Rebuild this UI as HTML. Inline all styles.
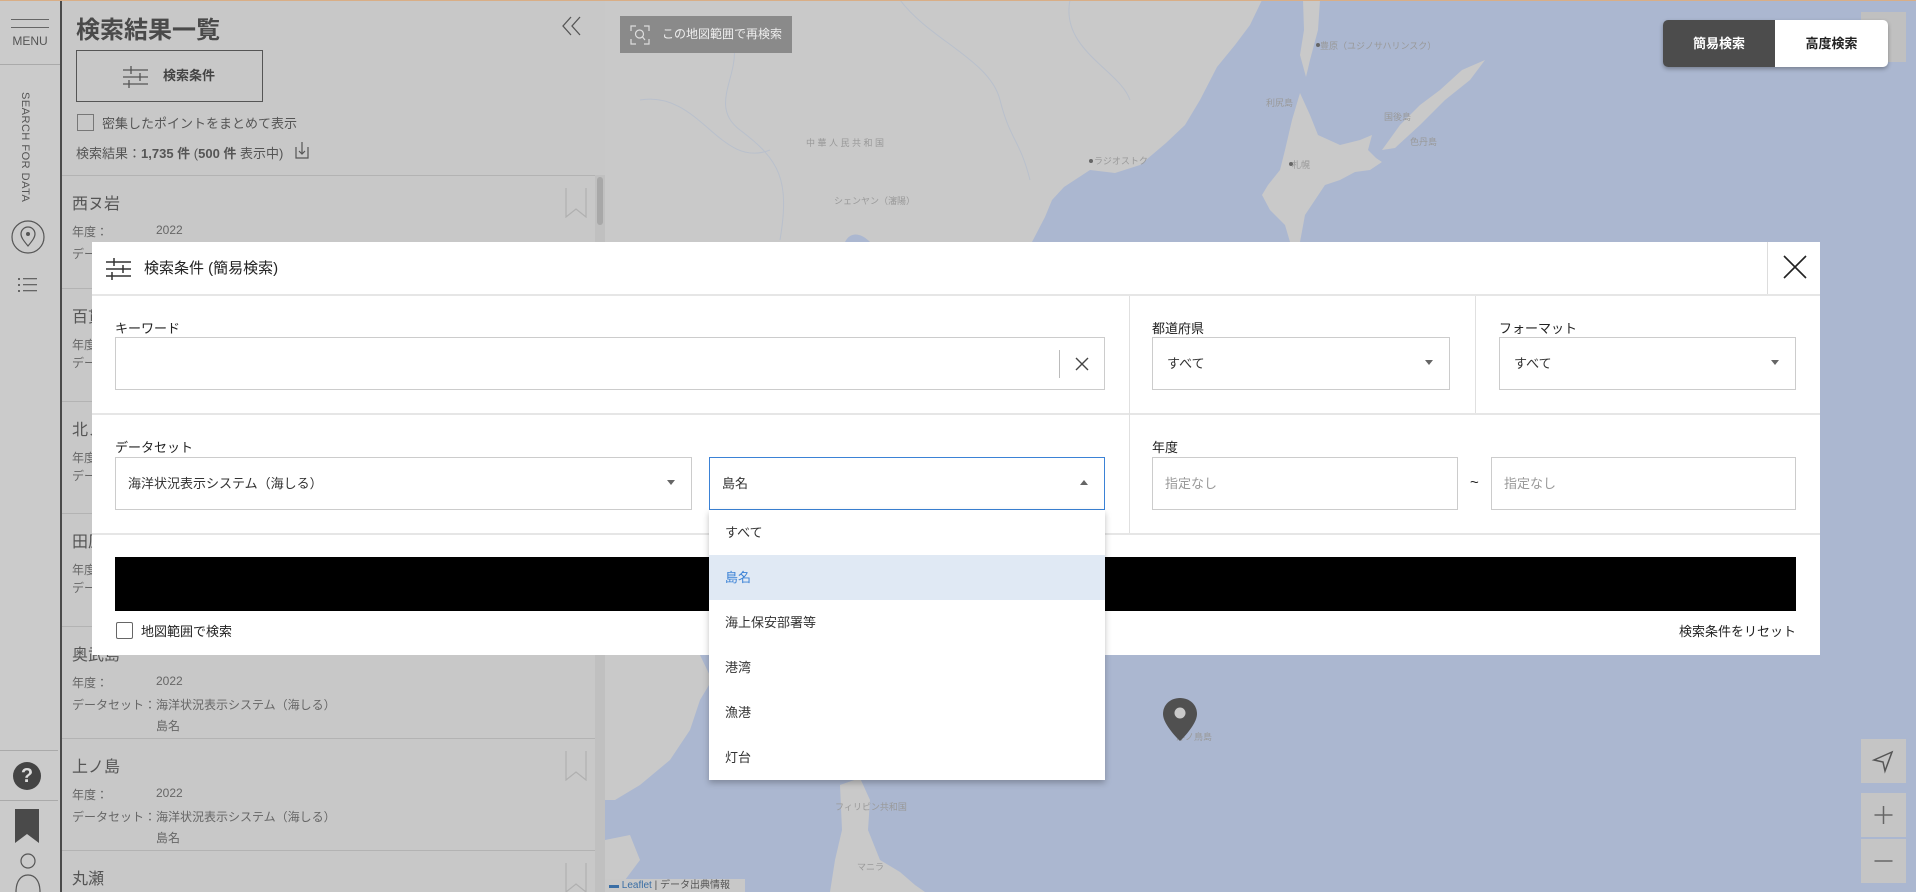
<!DOCTYPE html>
<html><head><meta charset="utf-8"><style>
*{box-sizing:border-box;margin:0;padding:0}
html,body{width:1916px;height:892px;overflow:hidden}
body{position:relative;font-family:"Liberation Sans","Noto Sans CJK JP",sans-serif;background:#abb7d0;color:#222}
.abs{position:absolute}
#rail{left:0;top:0;width:62px;height:892px;background:#cbcbcb;border-right:2px solid #4a4a4a;overflow:hidden}
#side{left:62px;top:0;width:543px;height:892px;background:#c8c8c8;color:#555;overflow:hidden}
.item{position:absolute;left:0;width:533px;height:112px;border-top:1px solid #b3b3b3}
.item .t{position:absolute;left:10px;top:14px;font-size:16px;color:#555}
.item .r{position:absolute;left:10px;font-size:12px;color:#666}
.item .v{position:absolute;left:94px;font-size:12px;color:#666}
.bm{position:absolute;right:8px;top:12px}
#modal{left:92px;top:242px;width:1728px;height:413px;background:#fff}
.lbl{position:absolute;font-size:13px;color:#222}
.box{position:absolute;border:1px solid #ccc;background:#fff;font-size:13px;color:#333}
.arr{position:absolute;right:16px;top:22px;width:0;height:0;border-left:4px solid transparent;border-right:4px solid transparent;border-top:5px solid #666}
.dd div{height:45px;line-height:45px;padding-left:16px;font-size:13px;color:#333}
</style></head><body>
<div class="abs" style="left:0;top:0;width:1916px;height:1px;background:#d9ae86;z-index:9"></div>
<!-- map -->
<svg class="abs" style="left:605px;top:0" width="1311" height="892" viewBox="605 0 1311 892">
<rect x="605" y="0" width="1311" height="892" fill="#abb7d0"/>
<path d="M605 0 L1262 0 L1250 25 L1235 45 L1217 67 L1200 100 L1185 125 L1166 143 L1140 165 L1115 173 L1090 170 L1064 187 L1052 200 L1045 217 L1032 242 L605 242 Z" fill="#c9c9c9"/>
<path d="M870 242 C860 232 850 232 845 242 Z" fill="#abb7d0"/>
<path d="M1303 0 L1320 0 L1318 30 L1310 60 L1306 77 L1300 55 L1304 30 Z" fill="#c9c9c9"/>
<path d="M1300 93 L1310 115 L1318 135 L1340 145 L1360 140 L1372 135 L1368 150 L1376 158 L1382 162 L1370 170 L1355 172 L1340 180 L1325 185 L1315 200 L1305 215 L1300 242 L1290 242 L1285 225 L1270 210 L1262 195 L1268 185 L1280 170 L1285 150 L1292 120 Z" fill="#c9c9c9"/>
<path d="M1382 150 L1400 125 L1420 105 L1440 90 L1462 70 L1485 60 L1470 80 L1445 100 L1420 125 L1395 148 Z" fill="#c9c9c9"/>
<path d="M605 655 L700 655 L712 680 L700 700 L690 730 L670 760 L640 785 L615 800 L605 800 Z" fill="#c9c9c9"/>
<path d="M605 840 L630 835 L640 860 L625 880 L605 885 Z" fill="#c9c9c9"/>
<path d="M840 785 L860 778 L870 800 L868 830 L880 860 L900 872 L915 885 L925 892 L830 892 L835 860 L842 830 Z" fill="#c9c9c9"/>
<g fill="none" stroke="#b9c0cc" stroke-width="1"><path d="M720 20 C760 60 700 100 740 130 S790 180 780 240"/><path d="M900 0 C930 40 990 60 1000 100 S1020 140 1030 180"/><path d="M1070 0 C1060 50 1120 70 1130 100"/><path d="M640 100 C700 90 720 170 770 150"/></g>
<g fill="#999" font-size="9" font-family="Liberation Sans,Noto Sans CJK JP,sans-serif">
<text x="806" y="146">中 華 人 民 共 和 国</text><text x="834" y="204">シェンヤン（瀋陽）</text><text x="1094" y="164">ラジオストク</text>
<text x="1320" y="49">豊原（ユジノサハリンスク）</text><text x="1292" y="168">札幌</text><text x="1266" y="106">利尻島</text><text x="1384" y="120">国後島</text><text x="1410" y="145">色丹島</text>
<text x="1176" y="740">沖ノ鳥島</text><text x="835" y="810">フィリピン共和国</text><text x="857" y="870">マニラ</text></g>
<circle cx="1091" cy="161" r="2" fill="#666"/><circle cx="1318" cy="45" r="2" fill="#666"/><circle cx="1291" cy="164" r="2" fill="#666"/>
<g transform="translate(1180,698)"><path d="M0 0 C-10 0 -17 7 -17 16 C-17 27 0 43 0 43 C0 43 17 27 17 16 C17 7 10 0 0 0Z" fill="#505050"/><circle cx="0" cy="15" r="5.5" fill="#c9c9c9"/></g>
</svg>
<!-- map controls -->
<div class="abs" style="left:620px;top:16px;width:172px;height:37px;background:#8a8a8a;color:#eee;font-size:12px;line-height:37px;padding-left:42px">この地図範囲で再検索
<svg class="abs" style="left:10px;top:9px" width="20" height="20"><path d="M1 6 V1 H6 M14 1 H19 V6 M19 14 V19 H14 M6 19 H1 V14" fill="none" stroke="#ddd" stroke-width="1.2"/><circle cx="9.5" cy="9" r="4" fill="none" stroke="#ddd" stroke-width="1.2"/><path d="M12.5 12 L15 15" stroke="#ddd" stroke-width="1.2"/></svg></div>
<div class="abs" style="left:1861px;top:12px;width:45px;height:50px;background:#c0c0c0"></div>
<div class="abs" style="left:1663px;top:20px;width:225px;height:47px;border-radius:5px;overflow:hidden;box-shadow:0 2px 4px rgba(0,0,0,.3);display:flex;font-size:13px;font-weight:bold">
<div style="width:112px;background:#4c4c4c;color:#fff;text-align:center;line-height:47px">簡易検索</div>
<div style="flex:1;background:#fff;color:#222;text-align:center;line-height:47px">高度検索</div></div>
<div class="abs" style="left:1861px;top:739px;width:45px;height:44px;background:#c5c5c5"><svg width="45" height="44"><path d="M31 13 L13 21 L22 23 L24 32 Z" fill="none" stroke="#555" stroke-width="1.5"/></svg></div>
<div class="abs" style="left:1861px;top:793px;width:45px;height:44px;background:#c5c5c5"><svg width="45" height="44"><path d="M22.5 13 V31 M13.5 22 H31.5" stroke="#666" stroke-width="1.5"/></svg></div>
<div class="abs" style="left:1861px;top:839px;width:45px;height:44px;background:#c5c5c5"><svg width="45" height="44"><path d="M13.5 22 H31.5" stroke="#666" stroke-width="1.5"/></svg></div>
<div class="abs" style="left:605px;top:879px;width:140px;height:13px;background:#c8c8c8;font-size:10px;color:#555;padding-left:4px;line-height:13px"><span style="color:#3a6ea5">▬ Leaflet</span> | データ出典情報</div>
<!-- rail -->
<div id="rail" class="abs">
<div class="abs" style="left:11px;top:19px;width:38px;height:1px;background:#666"></div>
<div class="abs" style="left:11px;top:27px;width:38px;height:1px;background:#666"></div>
<div class="abs" style="left:0;top:34px;width:60px;text-align:center;font-size:12px;color:#555">MENU</div>
<div class="abs" style="left:0;top:64px;width:60px;height:1px;background:#aaa"></div>
<div class="abs" style="left:19px;top:92px;writing-mode:vertical-rl;font-size:11px;color:#555;letter-spacing:.5px">SEARCH FOR DATA</div>
<svg class="abs" style="left:10px;top:219px" width="36" height="36"><circle cx="18" cy="18" r="16" fill="none" stroke="#555" stroke-width="1.2"/><path d="M18 27 C13 21 11 18 11 15 a7 7 0 0 1 14 0 C25 18 23 21 18 27Z" fill="none" stroke="#555" stroke-width="1.2"/><circle cx="18" cy="15" r="2" fill="#555"/></svg>
<svg class="abs" style="left:18px;top:277px" width="22" height="16"><g fill="#666"><rect x="0" y="1" width="2" height="2"/><rect x="0" y="7" width="2" height="2"/><rect x="0" y="13" width="2" height="2"/><rect x="5" y="1" width="14" height="1.3"/><rect x="5" y="7" width="14" height="1.3"/><rect x="5" y="13" width="14" height="1.3"/></g></svg>
<div class="abs" style="left:0;top:750px;width:58px;height:1px;background:#aaa"></div>
<div class="abs" style="left:13px;top:762px;width:28px;height:28px;border-radius:50%;background:#444;color:#ddd;font-weight:bold;text-align:center;line-height:28px;font-size:20px">?</div>
<div class="abs" style="left:0;top:800px;width:58px;height:1px;background:#aaa"></div>
<svg class="abs" style="left:15px;top:809px" width="26" height="36"><path d="M0 0 H24 V34 L12 25 L0 34Z" fill="#4a4a4a"/></svg>
<svg class="abs" style="left:15px;top:853px" width="26" height="39"><circle cx="13" cy="8" r="7" fill="none" stroke="#555" stroke-width="1.2"/><path d="M1 39 C1 28 6 22 13 22 C20 22 25 28 25 39" fill="none" stroke="#555" stroke-width="1.2"/></svg>
</div>
<!-- sidebar -->
<div id="side" class="abs">
<div class="abs" style="left:14px;top:10px;font-size:24px;font-weight:bold;color:#4a4a4a">検索結果一覧</div>
<svg class="abs" style="left:500px;top:16px" width="20" height="20"><path d="M9 1 L1 10 L9 19 M18 1 L10 10 L18 19" fill="none" stroke="#555" stroke-width="1.3"/></svg>
<div class="abs" style="left:14px;top:50px;width:187px;height:52px;border:1px solid #555;font-size:13px;font-weight:bold;color:#444;line-height:50px;padding-left:86px">検索条件
<svg class="abs" style="left:46px;top:15px" width="26" height="22"><g stroke="#555" stroke-width="1.3"><line x1="0" y1="4" x2="25" y2="4"/><line x1="0" y1="11" x2="25" y2="11"/><line x1="0" y1="18" x2="25" y2="18"/><line x1="8" y1="0" x2="8" y2="8"/><line x1="17" y1="7" x2="17" y2="15"/><line x1="6" y1="14" x2="6" y2="22"/></g></svg></div>
<div class="abs" style="left:15px;top:114px;width:17px;height:17px;border:1px solid #777"></div>
<div class="abs" style="left:40px;top:113px;font-size:13px;color:#555">密集したポイントをまとめて表示</div>
<div class="abs" style="left:14px;top:143px;font-size:13px;color:#555">検索結果：<b>1,735 件</b> (<b>500 件</b> 表示中)</div>
<svg class="abs" style="left:232px;top:142px" width="16" height="18"><path d="M2 5 V16 H14 V5 M8 0 V12 M5 9 L8 12 L11 9" fill="none" stroke="#555" stroke-width="1.2"/></svg>
<div class="abs" style="left:533px;top:175px;width:10px;height:717px;background:#c0c0c0"><div style="margin:2px;height:48px;background:#a8a8a8;border-radius:3px"></div></div>
<div class="item" style="top:175px"><div class="t">西ヌ岩</div><div class="r" style="top:47px">年度：</div><div class="v" style="top:47px">2022</div><div class="r" style="top:69px">データセット：</div><svg class="bm" width="22" height="30"><path d="M1 0 V29 L11 21 L21 29 V0" fill="none" stroke="#b0b0b0" stroke-width="1.2"/></svg></div>
<div class="item" style="top:288px"><div class="t">百貫</div><div class="r" style="top:47px">年度</div><div class="r" style="top:65px">デー</div></div>
<div class="item" style="top:401px"><div class="t">北ノ</div><div class="r" style="top:47px">年度</div><div class="r" style="top:65px">デー</div></div>
<div class="item" style="top:513px"><div class="t">田原</div><div class="r" style="top:47px">年度</div><div class="r" style="top:65px">デー</div></div>
<div class="item" style="top:626px"><div class="t">奥武島</div><div class="r" style="top:47px">年度：</div><div class="v" style="top:47px">2022</div><div class="r" style="top:69px">データセット：</div><div class="v" style="top:69px">海洋状況表示システム（海しる）</div><div class="v" style="top:90px">島名</div></div>
<div class="item" style="top:738px"><div class="t">上ノ島</div><div class="r" style="top:47px">年度：</div><div class="v" style="top:47px">2022</div><div class="r" style="top:69px">データセット：</div><div class="v" style="top:69px">海洋状況表示システム（海しる）</div><div class="v" style="top:90px">島名</div><svg class="bm" width="22" height="30"><path d="M1 0 V29 L11 21 L21 29 V0" fill="none" stroke="#b0b0b0" stroke-width="1.2"/></svg></div>
<div class="item" style="top:850px;height:42px"><div class="t">丸瀬</div><svg class="bm" width="22" height="30"><path d="M1 0 V29 L11 21 L21 29 V0" fill="none" stroke="#b0b0b0" stroke-width="1.2"/></svg></div>
</div>
<!-- modal -->
<div id="modal" class="abs">
<svg class="abs" style="left:14px;top:16px" width="26" height="22"><g stroke="#333" stroke-width="1.5"><line x1="0" y1="4" x2="25" y2="4"/><line x1="0" y1="11" x2="25" y2="11"/><line x1="0" y1="18" x2="25" y2="18"/><line x1="8" y1="0" x2="8" y2="8"/><line x1="17" y1="7" x2="17" y2="15"/><line x1="6" y1="14" x2="6" y2="22"/></g></svg>
<div class="abs" style="left:52px;top:15px;font-size:15px;color:#222">検索条件 (簡易検索)</div>
<div class="abs" style="left:1675px;top:0;width:1px;height:52px;background:#ddd"></div>
<svg class="abs" style="left:1691px;top:13px" width="24" height="24"><path d="M1 1 L23 23 M23 1 L1 23" stroke="#222" stroke-width="1.6"/></svg>
<div class="abs" style="left:0;top:52px;width:1728px;height:2px;background:#e6e6e6"></div>
<div class="abs" style="left:0;top:171px;width:1728px;height:2px;background:#e6e6e6"></div>
<div class="abs" style="left:0;top:291px;width:1728px;height:2px;background:#e6e6e6"></div>
<div class="abs" style="left:1037px;top:54px;width:1px;height:237px;background:#e0e0e0"></div>
<div class="abs" style="left:1383px;top:54px;width:1px;height:117px;background:#e0e0e0"></div>
<div class="lbl" style="left:23px;top:76px">キーワード</div>
<div class="box" style="left:23px;top:95px;width:990px;height:53px"><div class="abs" style="right:44px;top:12px;width:1px;height:28px;background:#bbb"></div>
<svg class="abs" style="right:15px;top:19px" width="14" height="14"><path d="M1 1 L13 13 M13 1 L1 13" stroke="#444" stroke-width="1.4"/></svg></div>
<div class="lbl" style="left:1060px;top:76px">都道府県</div>
<div class="box" style="left:1060px;top:95px;width:298px;height:53px;line-height:51px;padding-left:14px">すべて<div class="arr"></div></div>
<div class="lbl" style="left:1407px;top:76px">フォーマット</div>
<div class="box" style="left:1407px;top:95px;width:297px;height:53px;line-height:51px;padding-left:14px">すべて<div class="arr"></div></div>
<div class="lbl" style="left:23px;top:195px">データセット</div>
<div class="box" style="left:23px;top:215px;width:577px;height:53px;line-height:51px;padding-left:12px">海洋状況表示システム（海しる）<div class="arr"></div></div>
<div class="box" style="left:617px;top:215px;width:396px;height:53px;line-height:51px;padding-left:12px;border-color:#3b82d6">島名<div class="arr" style="border-top:none;border-bottom:5px solid #666"></div></div>
<div class="lbl" style="left:1060px;top:195px">年度</div>
<div class="box" style="left:1060px;top:215px;width:306px;height:53px;line-height:51px;padding-left:12px;color:#999">指定なし</div>
<div class="lbl" style="left:1378px;top:232px;font-size:15px">~</div>
<div class="box" style="left:1399px;top:215px;width:305px;height:53px;line-height:51px;padding-left:12px;color:#999">指定なし</div>
<div class="abs" style="left:23px;top:315px;width:1681px;height:54px;background:#000"></div>
<div class="abs" style="left:24px;top:380px;width:17px;height:17px;border:1px solid #666;border-radius:2px"></div>
<div class="lbl" style="left:49px;top:379px">地図範囲で検索</div>
<div class="lbl" style="right:24px;top:379px">検索条件をリセット</div>
</div>
<div class="abs dd" style="left:709px;top:510px;width:396px;height:270px;background:#fff;box-shadow:0 3px 6px rgba(0,0,0,.25)">
<div>すべて</div><div style="background:#e0e9f4;color:#3b82d6">島名</div><div>海上保安部署等</div><div>港湾</div><div>漁港</div><div>灯台</div></div>
</body></html>
